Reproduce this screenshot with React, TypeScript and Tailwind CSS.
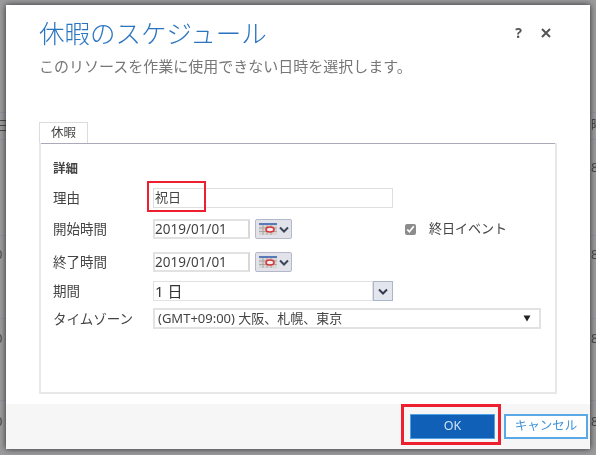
const font = { jp: "font-['Noto_Sans','Noto_Sans_CJK_JP',sans-serif]" };

// fragments of the page behind the dialog, visible at its edges
const rowLines = [112, 139, 235, 318, 400];
const edgeGlyphs = [
  { left: "left-[-4px] top-[116px]", text: "日" },
  { left: "left-[-5px] top-[245px]", text: "0" },
  { left: "left-[-5px] top-[329px]", text: "0" },
  { left: "left-[-5px] top-[412px]", text: "0" },
  { left: "left-[591px] top-[115px]", text: "曜" },
  { left: "left-[591px] top-[158px]", text: "8" },
  { left: "left-[591px] top-[245px]", text: "8" },
  { left: "left-[591px] top-[329px]", text: "8" },
  { left: "left-[591px] top-[412px]", text: "8" },
];

function CalendarButton() {
  return (
    <button className="ml-[5px] flex h-[20px] w-[37px] items-center justify-center gap-[2px] rounded-[2px] border border-[#b4b8c8] bg-[#e2e3ea]">
      <svg width="18" height="12" viewBox="0 0 18 12" className="shrink-0">
        <rect x="0" y="0" width="18" height="12" fill="#d9d5d2" />
        <rect x="0" y="0" width="18" height="2" fill="#5b78b8" />
        <path d="M0 5h18M0 8.5h18M4 2v10M8 2v10M12 2v10" stroke="#9c9c9c" strokeWidth="0.8" />
        <ellipse cx="11" cy="6.5" rx="4" ry="2.5" fill="#eee" stroke="#d8343a" strokeWidth="1.6" />
      </svg>
      <svg width="10" height="7" viewBox="0 0 10 7" className="shrink-0">
        <path d="M1 1.5l4 4 4-4" fill="none" stroke="#3c4658" strokeWidth="2" />
      </svg>
    </button>
  );
}

function DateField({ value }: { value: string }) {
  return (
    <div className="flex h-[20px] w-[97px] items-center border-2 border-[#e2e2e2] border-r-[#d8d8d8] text-[13.5px] leading-[16px] text-[#444]">
      {value}
    </div>
  );
}

function Label({ children }: { children: string }) {
  return <div className="w-[100px] text-[13.5px] leading-[18px] text-[#444]">{children}</div>;
}

export default function App() {
  return (
    <div className={`relative h-[455px] w-[596px] overflow-hidden bg-[#9b9b9d] pl-[6px] pt-[5px] blur-[0.45px] ${font.jp}`}>
      {rowLines.map((y) => (
        <div key={y} className="absolute left-0 h-px w-full bg-[#8f93a0]" style={{ top: y }} />
      ))}
      {edgeGlyphs.map((g) => (
        <span key={g.left} className={`absolute text-[13px] leading-[18px] text-[#4a4a4a] ${g.left}`}>
          {g.text}
        </span>
      ))}

      <div className="relative flex h-[444px] w-[584px] flex-col bg-white shadow-[0_0_6px_rgba(0,0,0,0.7)]">
        {/* Header */}
        <div className="relative h-[117px] pl-[33px] pt-[11px]">
          <h1 className="text-[25.5px] leading-[34px] font-light text-[#2a74c0]">休暇のスケジュール</h1>
          <p className="mt-[6px] text-[15px] leading-[20px] text-[#777]">
            このリソースを作業に使用できない日時を選択します。
          </p>
          <div className="absolute right-[39px] top-[20px] flex items-center gap-[19px] text-[#555]">
            <span className="text-[14px] font-bold leading-[16px]">?</span>
            <svg width="10" height="10" viewBox="0 0 10 10">
              <path d="M1 1l8 8M9 1l-8 8" stroke="#555" strokeWidth="2" />
            </svg>
          </div>
        </div>

        {/* Tab */}
        <div className="ml-[33px] flex h-[21px] w-[49px] items-center border border-b-0 border-[#dcdcdc] bg-white pl-[11px] text-[12.5px] text-[#444]">
          休暇
        </div>

        {/* Panel */}
        <div className="ml-[33px] h-[251px] w-[518px] border-2 border-t-0 border-[#e8e8e8]">
          <div className="h-px bg-[#a9a9b8]" />
          <div className="pl-[12px]">
            <div className="mt-[17px] text-[12.5px] font-bold leading-[16px] text-[#444]">詳細</div>

            <div className="mt-[11px] flex h-[20px] items-center">
              <Label>理由</Label>
              <div className="flex h-[20px] w-[240px] items-center border border-[#dedede] pl-[1px] text-[13px] text-[#444]">
                祝日
              </div>
            </div>

            <div className="mt-[11px] flex h-[20px] items-center">
              <Label>開始時間</Label>
              <DateField value="2019/01/01" />
              <CalendarButton />
              <input type="checkbox" readOnly checked className="ml-[113px] h-[11px] w-[11px] accent-[#8c8c8c]" />
              <span className="ml-[13px] text-[13px] text-[#444]">終日イベント</span>
            </div>

            <div className="mt-[13px] flex h-[20px] items-center">
              <Label>終了時間</Label>
              <DateField value="2019/01/01" />
              <CalendarButton />
            </div>

            <div className="mt-[9px] flex h-[20px] items-center">
              <Label>期間</Label>
              <div className="flex h-[20px] w-[220px] items-center border border-[#e2e2e6] pl-[1px] text-[15px] text-[#333]">
                1 日
              </div>
              <div className="flex h-[20px] w-[20px] items-center justify-center border border-[#a9b6cc] bg-[#e4e6ee]">
                <svg width="10" height="7" viewBox="0 0 10 7">
                  <path d="M1 1.5l4 4 4-4" fill="none" stroke="#333c4e" strokeWidth="2" />
                </svg>
              </div>
            </div>

            <div className="mt-[7px] flex h-[21px] items-center">
              <Label>タイムゾーン</Label>
              <div className="flex h-[21px] w-[388px] items-center justify-between border-2 border-[#e2e2e2] pl-[3px] pr-[8px] text-[13px] text-[#444]">
                <span>(GMT+09:00) 大阪、札幌、東京</span>
                <svg width="8" height="7" viewBox="0 0 8 7">
                  <path d="M0.5 0.5h7L4 6.5z" fill="#222" />
                </svg>
              </div>
            </div>
          </div>
        </div>

        {/* Footer */}
        <div className="mt-auto flex h-[45px] items-start justify-end gap-[9px] bg-[#f6f6f6] pr-[2px] pt-[10px]">
          <button className="h-[25px] w-[85px] border border-[#4fa3e3] bg-[#1160b7] text-[12.5px] text-[#cfe0f2]">OK</button>
          <button className="h-[25px] w-[84px] border-2 border-[#5aa9e6] bg-white text-[12.5px] text-[#3f93d8]">キャンセル</button>
        </div>
      </div>

      {/* Red highlight annotations */}
      <div className="absolute left-[147px] top-[181px] h-[31px] w-[59px] border-[2px] border-[#ee2030]" />
      <div className="absolute left-[401px] top-[404px] h-[41px] w-[100px] border-[3px] border-[#ee2030]" />
    </div>
  );
}
